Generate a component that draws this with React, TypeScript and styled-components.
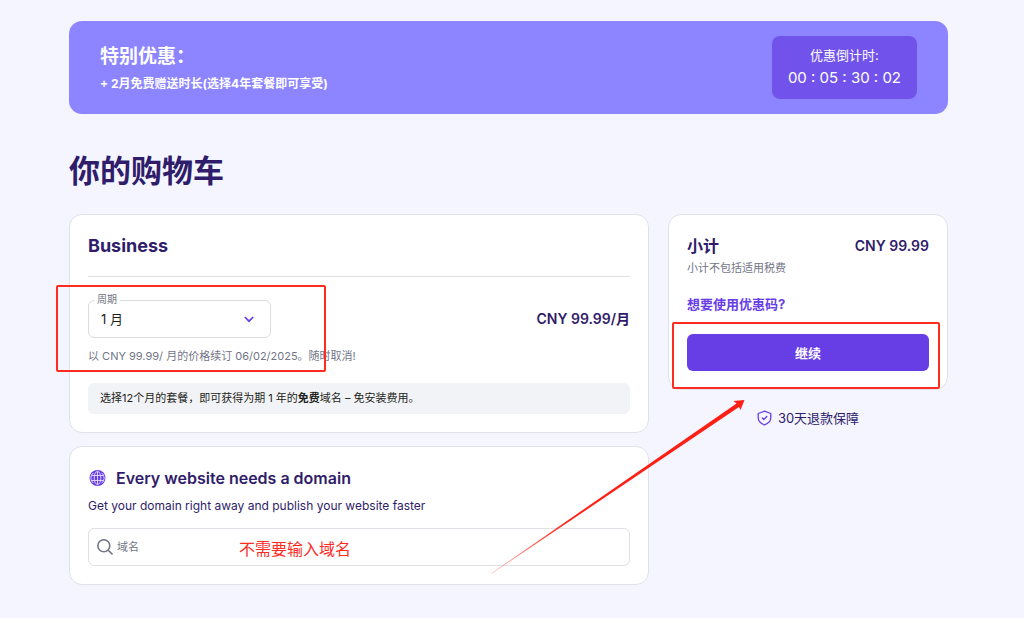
import React from "react";
import styled, { createGlobalStyle } from "styled-components";

const GlobalStyle = createGlobalStyle`
  * { box-sizing: border-box; }
  body {
    margin: 0;
    background: #f4f5ff;
    color: #2f1c6a;
    font-family: Inter, "Noto Sans CJK SC", sans-serif;
    font-size: 13px;
    line-height: 18px;
  }
  button, input, select { font-family: inherit; }
  h1, h2, p { margin: 0; }
`;

const Page = styled.main`
  padding: 21px 76px 32px 69px;
`;

const Banner = styled.section`
  display: flex;
  align-items: center;
  justify-content: space-between;
  padding: 15px 31px;
  border-radius: 13px;
  background: #8c85ff;
  color: #fff;
`;

const BannerTitle = styled.h2`
  padding-top: 4px;
  font-size: 19px;
  line-height: 28px;
  font-weight: 700;
`;

const BannerText = styled.p`
  font-size: 12px;
  line-height: 26px;
  font-weight: 700;
`;

const Countdown = styled.div`
  padding: 9px 16px;
  border-radius: 8px;
  background: #7153ec;
  text-align: center;
  line-height: 20px;
`;

const CountdownTime = styled.div`
  font-size: 15px;
  line-height: 25px;
  white-space: nowrap;
`;

const PageTitle = styled.h1`
  margin: 37px 0 23px;
  font-size: 31px;
  line-height: 40px;
  font-weight: 700;
`;

const Columns = styled.div`
  position: relative;
  display: grid;
  grid-template-columns: minmax(0, 1fr) 280px;
  gap: 19px;
  align-items: start;
`;

const Stack = styled.div`
  display: flex;
  flex-direction: column;
  gap: 13px;
`;

const Card = styled.section`
  padding: 19px 18px 18px;
  border: 1px solid #e0e1ec;
  border-radius: 13px;
  background: #fff;
`;

const CardTitle = styled.h2<{ $large?: boolean }>`
  display: flex;
  align-items: center;
  gap: 9px;
  font-size: ${(p) => (p.$large ? 18 : 16)}px;
  line-height: 24px;
  font-weight: ${(p) => (p.$large ? 700 : 600)};
`;

const PlanHeader = styled.header`
  padding-bottom: 18px;
  border-bottom: 1px solid #dfe1e6;
`;

const PlanBody = styled.div`
  position: relative;
  padding: 23px 0 18px;
`;

const PlanRow = styled.div`
  display: flex;
  align-items: center;
  justify-content: space-between;
`;

const Price = styled.strong`
  font-size: 14px;
  line-height: 24px;
  font-weight: 600;
`;

const Field = styled.div`
  position: relative;
  width: 183px;
`;

const FieldLabel = styled.label`
  position: absolute;
  top: -9px;
  left: 6px;
  padding: 0 3px;
  background: #fff;
  color: #727586;
  font-size: 10px;
  line-height: 16px;
`;

const PeriodSelect = styled.select`
  display: block;
  width: 100%;
  height: 38px;
  padding: 0 12px;
  border: 1px solid #dadce0;
  border-radius: 6px;
  appearance: none;
  background: #fff;
  color: #1d1e20;
  font-size: 13px;
`;

const Chevron = styled.svg`
  position: absolute;
  top: 13px;
  right: 16px;
  pointer-events: none;
`;

const Muted = styled.p`
  color: #727586;
  font-size: 11px;
  line-height: 18px;
`;

const RenewalNote = styled(Muted)`
  margin-top: 9px;
`;

const InfoBox = styled.p`
  padding: 7px 12px;
  border-radius: 6px;
  background: #f2f3f6;
  color: #1d1e20;
  font-size: 11px;
  line-height: 17px;
`;

const DomainText = styled.p`
  margin: 7px 0 13px;
  font-size: 12px;
`;

const SearchBox = styled.div`
  position: relative;
  display: flex;
  align-items: center;
  gap: 4px;
  height: 38px;
  padding: 0 8px;
  border: 1px solid #dfe0e6;
  border-radius: 6px;
`;

const SearchInput = styled.input`
  flex: 1;
  min-width: 0;
  height: 100%;
  padding: 0;
  border: 0;
  outline: 0;
  background: transparent;
  color: #1d1e20;
  font-size: 11px;
  &::placeholder { color: #727586; opacity: 1; }
`;

const TotalRow = styled.div`
  display: flex;
  justify-content: space-between;
  margin-bottom: 1px;
`;

const CouponLink = styled.a`
  display: block;
  margin: 17px 0 20px;
  color: #673de6;
  font-weight: 700;
  font-size: 13px;
  line-height: 20px;
  text-decoration: none;
`;

const ButtonWrap = styled.div`
  position: relative;
`;

const ContinueButton = styled.button`
  display: block;
  width: 100%;
  height: 37px;
  border: 0;
  border-radius: 6px;
  background: #673de6;
  color: #fff;
  font-size: 13px;
  font-weight: 700;
`;

const Guarantee = styled.p`
  display: flex;
  align-items: center;
  justify-content: center;
  gap: 6px;
  margin-top: 18px;
  line-height: 20px;
`;

const Highlight = styled.div<{ $inset: string }>`
  position: absolute;
  inset: ${(p) => p.$inset};
  border: 2px solid #ff2b1f;
  border-radius: 2px;
  pointer-events: none;
`;

const RedNote = styled.span`
  position: absolute;
  left: 150px;
  top: 8px;
  color: #ff2b1f;
  font-size: 16px;
  line-height: 24px;
  pointer-events: none;
`;

const Arrow = styled.svg`
  position: absolute;
  right: 202px;
  top: 185px;
  pointer-events: none;
`;

function GlobeIcon() {
  return (
    <svg width="19" height="18" viewBox="0 0 19 18" aria-hidden="true">
      <circle cx="9.5" cy="9" r="8" fill="#673de6" />
      <g fill="none" stroke="#e6dfff" strokeWidth="0.9">
        <ellipse cx="9.5" cy="9" rx="3.3" ry="6.6" />
        <path d="M9.5 2.4v13.200M3.300 6.500h12.400M3.300 11.500h12.400" />
        <path d="M5.300 3.900A6.500 6.500 0 0 0 5.300 14.100M13.700 3.900A6.500 6.500 0 0 1 13.700 14.100" />
      </g>
    </svg>
  );
}

function SearchIcon() {
  return (
    <svg width="16" height="18" viewBox="0 0 16 18" fill="none" stroke="#727586" strokeWidth="1.6" aria-hidden="true">
      <circle cx="6.8" cy="7.8" r="6" />
      <path d="M11.2 12.2l4.3 4.3" />
    </svg>
  );
}

function ShieldIcon() {
  return (
    <svg width="15" height="16" viewBox="0 0 15 16" fill="none" stroke="#673de6" strokeWidth="1.3" strokeLinecap="round" strokeLinejoin="round" aria-hidden="true">
      <path d="M7.5 1.2L13.8 3.5V7.5C13.8 11 11.6 13.5 7.5 14.8C3.4 13.5 1.2 11 1.2 7.5V3.5Z" />
      <path d="M5.2 7.9l1.6 1.6 3-3" />
    </svg>
  );
}

export default function App() {
  return (
    <>
      <GlobalStyle />
      <Page>
        <Banner>
          <div>
            <BannerTitle>特别优惠：</BannerTitle>
            <BannerText>+ 2月免费赠送时长(选择4年套餐即可享受)</BannerText>
          </div>
          <Countdown>
            <div>优惠倒计时:</div>
            <CountdownTime>00 : 05 : 30 : 02</CountdownTime>
          </Countdown>
        </Banner>

        <PageTitle>你的购物车</PageTitle>

        <Columns>
          <Stack>
            <Card>
              <PlanHeader>
                <CardTitle $large>Business</CardTitle>
              </PlanHeader>
              <PlanBody>
                <PlanRow>
                  <Field>
                    <PeriodSelect id="period" defaultValue="1">
                      <option value="1">1 月</option>
                      <option value="12">12 月</option>
                    </PeriodSelect>
                    <FieldLabel htmlFor="period">周期</FieldLabel>
                    <Chevron width="12" height="12" viewBox="0 0 12 12" fill="none" stroke="#673de6" strokeWidth="1.7">
                      <path d="M1.8 4l4.2 4.2L10.2 4" />
                    </Chevron>
                  </Field>
                  <Price>CNY 99.99/月</Price>
                </PlanRow>
                <RenewalNote>以 CNY 99.99/ 月的价格续订 06/02/2025。随时取消!</RenewalNote>
                <Highlight $inset="8px 304px 11px -32px" />
              </PlanBody>
              <InfoBox>
                选择12个月的套餐，即可获得为期 1 年的<b>免费</b>域名 – 免安装费用。
              </InfoBox>
            </Card>

            <Card>
              <CardTitle>
                <GlobeIcon />
                Every website needs a domain
              </CardTitle>
              <DomainText>Get your domain right away and publish your website faster</DomainText>
              <SearchBox>
                <SearchIcon />
                <SearchInput type="text" placeholder="域名" aria-label="域名" />
                <RedNote>不需要输入域名</RedNote>
              </SearchBox>
            </Card>
          </Stack>

          <aside>
            <Card>
              <TotalRow>
                <CardTitle>小计</CardTitle>
                <Price>CNY 99.99</Price>
              </TotalRow>
              <Muted>小计不包括适用税费</Muted>
              <CouponLink href="#coupon">想要使用优惠码?</CouponLink>
              <ButtonWrap>
                <ContinueButton type="button">继续</ContinueButton>
                <Highlight $inset="-12px -11px -18px -15px" />
              </ButtonWrap>
            </Card>
            <Guarantee>
              <ShieldIcon />
              30天退款保障
            </Guarantee>
          </aside>

          <Arrow width="256" height="176" viewBox="0 0 256 176" aria-hidden="true">
            <defs>
              <linearGradient id="fade" x1="0" y1="1" x2="1" y2="0">
                <stop offset="0" stopColor="#ff2015" stopOpacity="0.3" />
                <stop offset="0.3" stopColor="#ff2015" />
              </linearGradient>
            </defs>
            <path d="M1 174.500L246.500 4.500L243.500 2L254.500 1L250.500 11L249 8L2 174.500Z" fill="url(#fade)" />
          </Arrow>
        </Columns>
      </Page>
    </>
  );
}
